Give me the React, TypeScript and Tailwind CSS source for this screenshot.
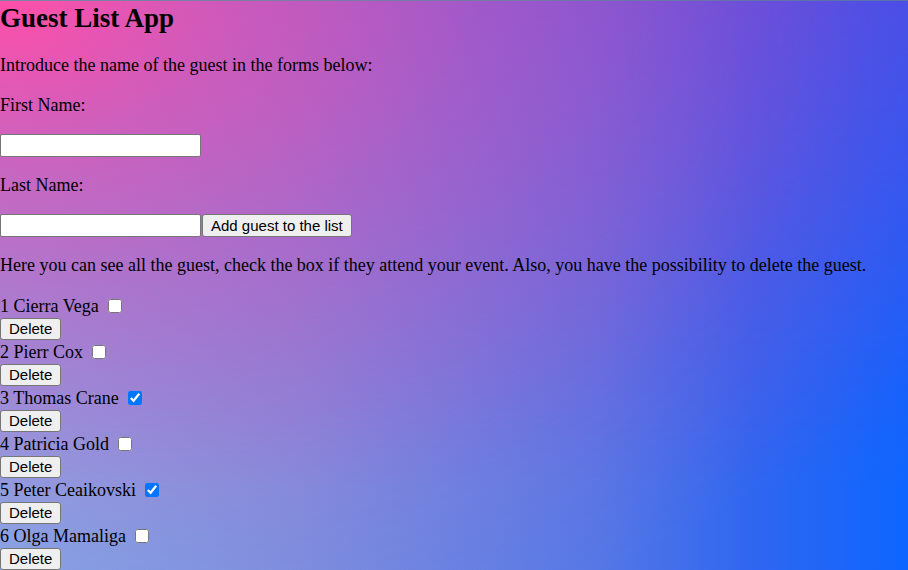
import { useState } from 'react';

type Guest = { id: number; name: string; attends: boolean };

const initialGuests: Guest[] = [
    { id: 1, name: 'Cierra Vega', attends: false },
    { id: 2, name: 'Pierr Cox', attends: false },
    { id: 3, name: 'Thomas Crane', attends: true },
    { id: 4, name: 'Patricia Gold', attends: false },
    { id: 5, name: 'Peter Ceaikovski', attends: true },
    { id: 6, name: 'Olga Mamaliga', attends: false },
];

const inputClass = 'block h-[23px] w-[201px] rounded-[2px] border border-[#767676] bg-white px-[2px] font-["Liberation_Sans",Arial,sans-serif] text-[15px] text-black outline-none';
const buttonClass = 'h-[22px] rounded-[3px] border border-[#767676] bg-[#efefef] px-[8px] font-["Liberation_Sans",Arial,sans-serif] text-[15px] leading-[18px] text-black';

const App = () => {
    const [guests, setGuests] = useState<Guest[]>(initialGuests);
    const [firstName, setFirstName] = useState('');
    const [lastName, setLastName] = useState('');

    const addGuest = () => {
        const name = `${firstName} ${lastName}`.trim();
        if (!name) return;
        setGuests((prev) => [...prev, { id: prev.length + 1, name, attends: false }]);
        setFirstName('');
        setLastName('');
    };

    const toggleGuest = (id: number) =>
        setGuests((prev) => prev.map((g) => (g.id === id ? { ...g, attends: !g.attends } : g)));

    const deleteGuest = (id: number) => setGuests((prev) => prev.filter((g) => g.id !== id));

    return (
        <div className='h-screen overflow-hidden border-t border-[rgba(120,120,140,0.7)] bg-[image:radial-gradient(ellipse_farthest-corner_at_0%_0%,#ff4fa8_0%,rgba(255,79,168,0.62)_18%,rgba(255,79,168,0.36)_37%,rgba(255,79,168,0.24)_50%,rgba(255,79,168,0.08)_68%,rgba(255,79,168,0)_85%),linear-gradient(to_bottom,rgba(120,50,210,0.45),rgba(120,50,210,0)_85%),linear-gradient(to_right,#80a8e8_0%,#7890e0_33%,#5577e6_66%,#2f66f0_83%,#0d66ff_100%)] font-["Liberation_Serif","Times_New_Roman",serif] text-[18px] text-black'>
            <h1 className="mb-[20px] text-[27px] font-bold leading-[34px]">Guest List App</h1>

            <p className="mt-[18px] mb-[19px] leading-[21px]">Introduce the name of the guest in the forms below:</p>

            <p className="my-[18px] leading-[21px]">First Name:</p>
            <div className="my-[18px]">
                <input className={inputClass} value={firstName} onChange={(e) => setFirstName(e.target.value)} />
            </div>

            <p className="my-[18px] leading-[21px]">Last Name:</p>
            <div className="my-[18px] flex">
                <input className={inputClass} value={lastName} onChange={(e) => setLastName(e.target.value)} />
                <button className={`${buttonClass} ml-[1px] h-[23px]`} onClick={addGuest}>
                    Add guest to the list
                </button>
            </div>

            <p className="my-[18px] leading-[21px]">
                Here you can see all the guest, check the box if they attend your event. Also, you have the possibility to delete the guest.
            </p>

            <div className="mt-[18px]">
                {guests.map((g) => (
                    <div key={g.id}>
                        <div className="flex h-[24px] items-center">
                            <span>
                                {g.id} {g.name}
                            </span>
                            <input
                                type="checkbox"
                                checked={g.attends}
                                onChange={() => toggleGuest(g.id)}
                                className="ml-[9px] h-[14px] w-[14px]"
                            />
                        </div>
                        <button className={`${buttonClass} block`} onClick={() => deleteGuest(g.id)}>
                            Delete
                        </button>
                    </div>
                ))}
            </div>
        </div>
    );
};

export default App;
